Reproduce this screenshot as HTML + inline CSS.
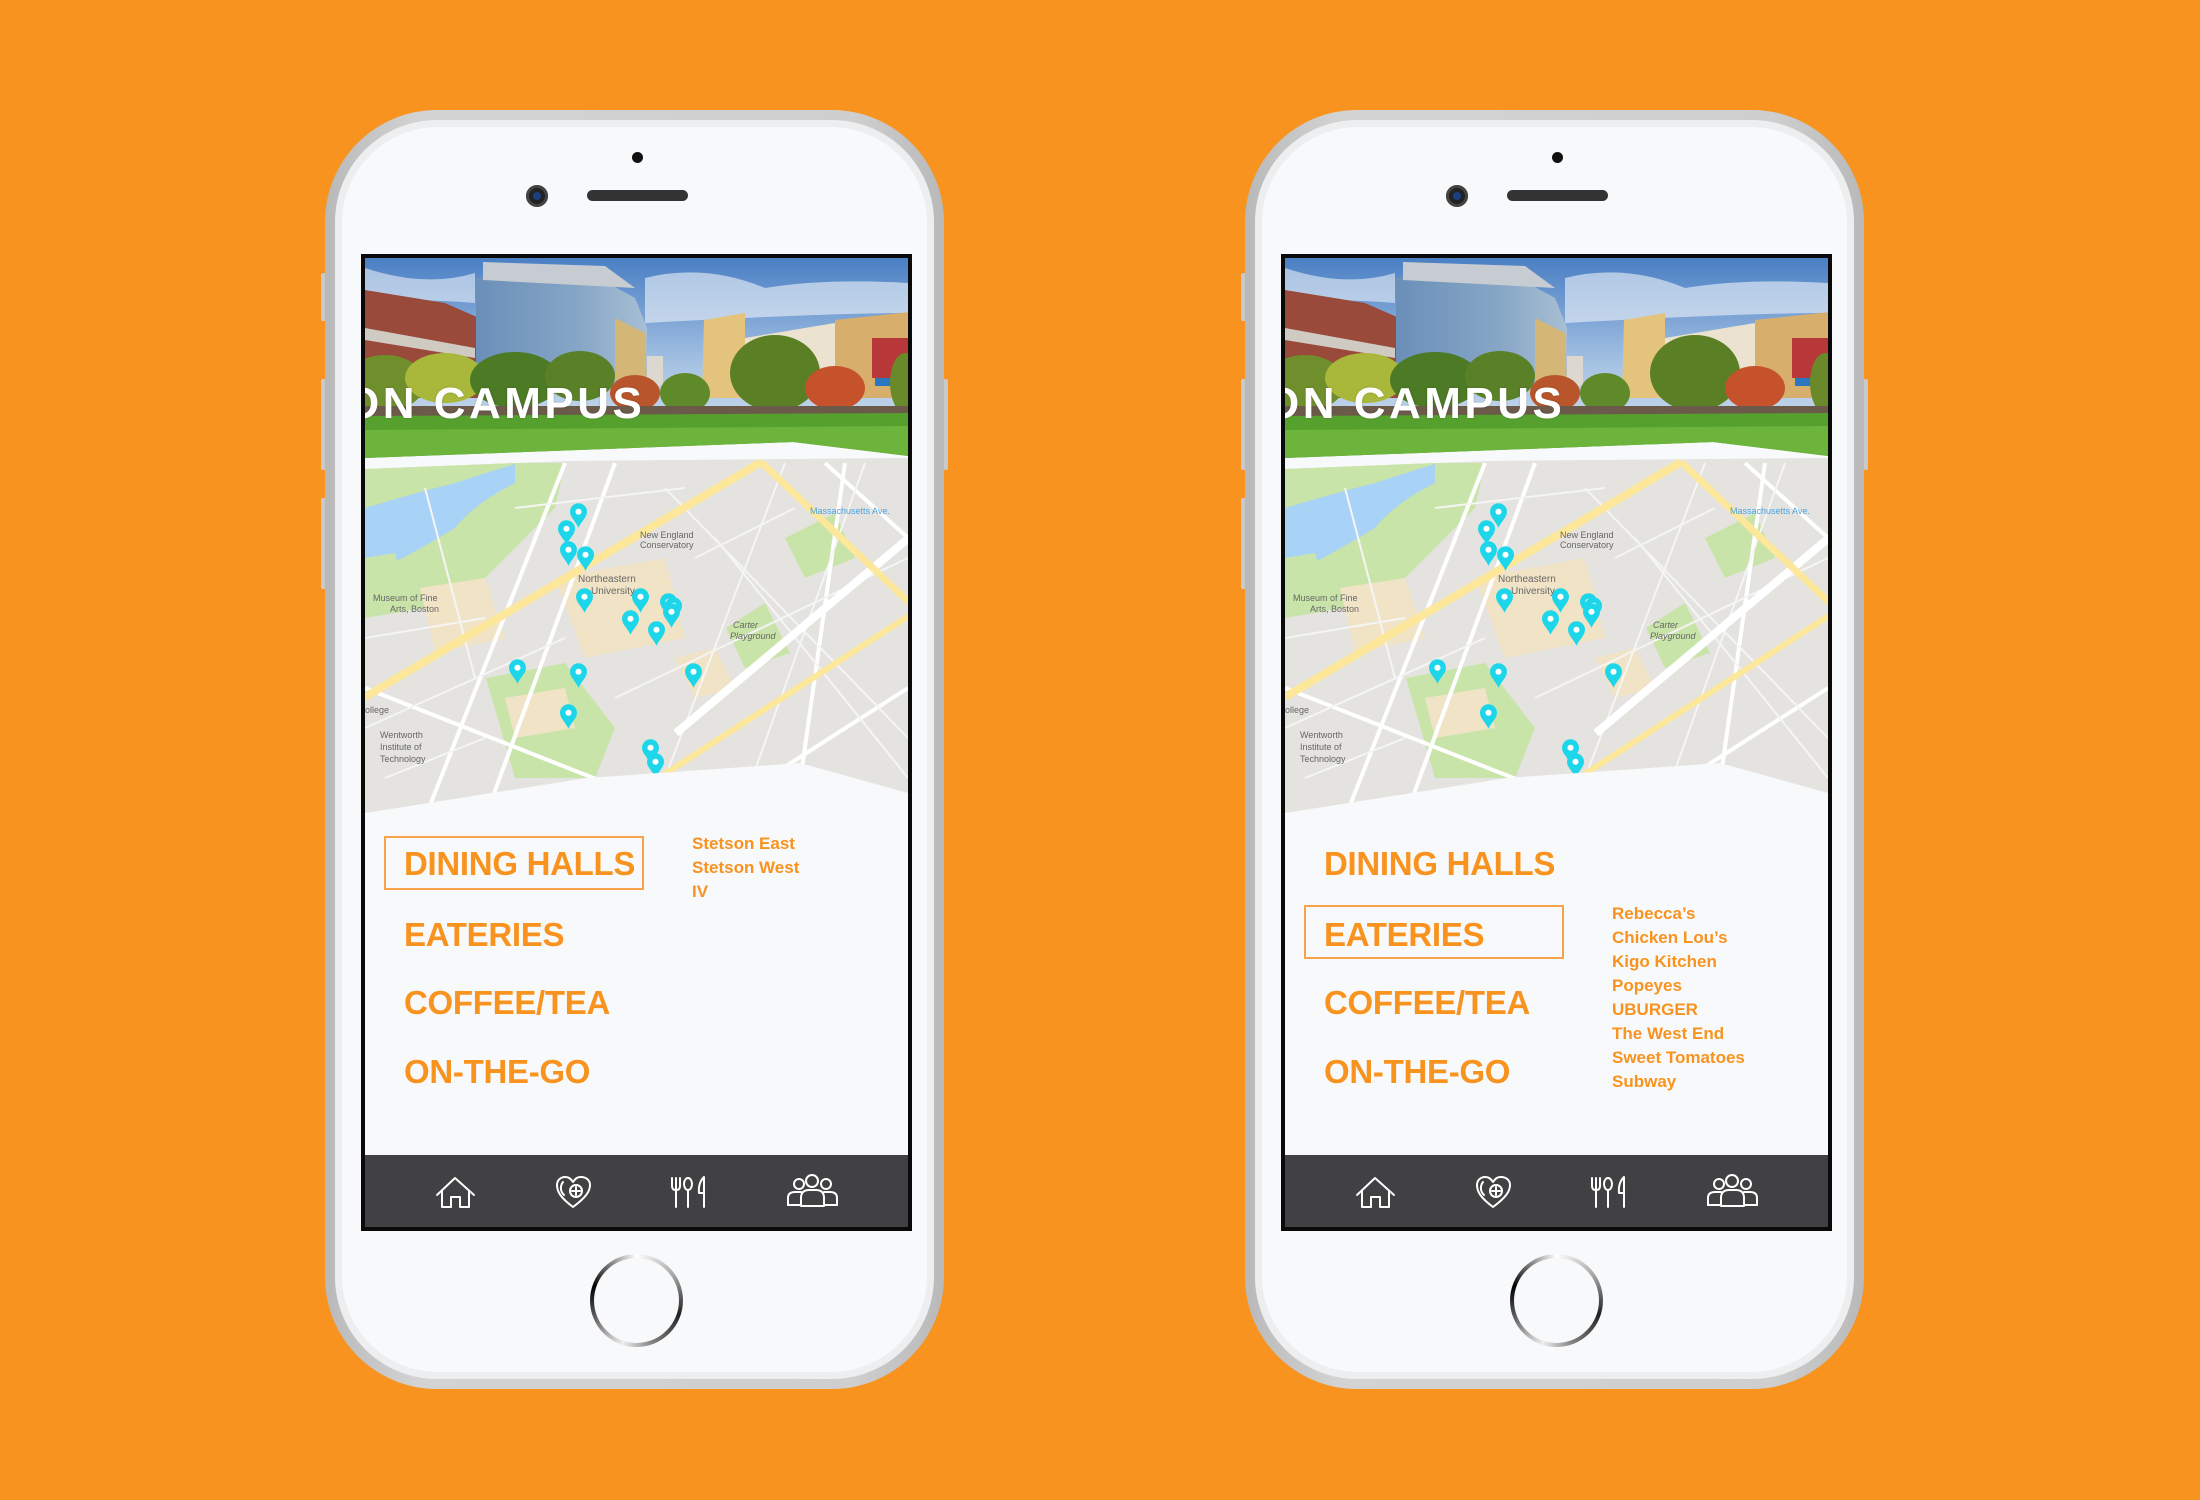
<!DOCTYPE html>
<html><head><meta charset="utf-8"><style>
*{margin:0;padding:0;box-sizing:border-box}
body{width:2200px;height:1500px;background:#f7931e;position:relative;overflow:hidden;font-family:"Liberation Sans",sans-serif}
.phone{position:absolute;top:110px;width:619px;height:1279px;border-radius:112px;background:linear-gradient(90deg,#b9b9b9,#d3d3d3 15%,#cfcfcf 85%,#b9b9b9);}
.phone .in{position:absolute;left:10px;top:10px;right:10px;bottom:10px;border-radius:102px;background:#eceeef}
.phone .in2{position:absolute;left:17px;top:17px;right:17px;bottom:17px;border-radius:96px;background:#f8f9fb}
.btn{position:absolute;width:5px;background:#c9c9c9;border-radius:2px}
.dot{position:absolute;left:307px;top:42px;width:11px;height:11px;border-radius:50%;background:#111}
.lens{position:absolute;left:201px;top:75px;width:22px;height:22px;border-radius:50%;background:#222;box-shadow:inset 0 0 0 3px #444}
.lens:after{content:"";position:absolute;left:7px;top:7px;width:8px;height:8px;border-radius:50%;background:#1c3e83}
.spk{position:absolute;left:262px;top:80px;width:101px;height:11px;border-radius:6px;background:#333}
.home{position:absolute;left:265px;top:1144px;width:93px;height:93px;border-radius:50%;background:conic-gradient(#fff,#aaa,#222 30%,#888 45%,#eee 55%,#555 70%,#000 80%,#fff);}
.home:after{content:"";position:absolute;left:4px;top:4px;right:4px;bottom:4px;border-radius:50%;background:#f8f9fb}
.screen{position:absolute;left:36px;top:144px;width:551px;height:977px;border:4px solid #0a0a0a;background:#f8f9fb;overflow:hidden}
.scr{position:absolute;left:0;top:0;width:543px;height:969px}
.title{position:absolute;left:-20px;top:124px;color:#fff;font-weight:bold;font-size:44px;letter-spacing:3.5px;line-height:1;white-space:nowrap;text-shadow:0 0 2px rgba(0,0,0,.2)}
.m{position:absolute;left:39px;color:#f7931e;font-weight:bold;font-size:33px;letter-spacing:-0.3px;line-height:1;white-space:nowrap}
.box{position:absolute;left:19px;width:260px;height:54px;border:2px solid #f7a34a}
.l{position:absolute;left:327px;color:#f7931e;font-weight:bold;font-size:17px;line-height:24px;white-space:nowrap}
.nav{position:absolute;left:0;top:897px;width:543px;height:72px;background:#414042}
</style></head><body>
<svg width="0" height="0" style="position:absolute">
<defs>
<clipPath id="mapclip"><polygon points="0,211 200,203 543,200 543,535 435,505 365,510 222,520 0,555"/></clipPath>
<clipPath id="photoclip"><polygon points="0,0 543,0 543,198 428,184 0,200"/></clipPath>
<linearGradient id="sky" x1="0" y1="0" x2="0" y2="1"><stop offset="0" stop-color="#4a7fc4"/><stop offset="0.55" stop-color="#a9c5e4"/><stop offset="1" stop-color="#d9e4ef"/></linearGradient>
<linearGradient id="glass" x1="0" y1="0" x2="1" y2="0"><stop offset="0" stop-color="#6a8fb8"/><stop offset="0.6" stop-color="#86a6c6"/><stop offset="1" stop-color="#a8bfd4"/></linearGradient>
<symbol id="pin" viewBox="0 0 18 26"><path d="M9 26 C6 19 0 15 0 9 A9 9 0 0 1 18 9 C18 15 12 19 9 26Z" fill="#1ed6ea"/><circle cx="9" cy="9" r="3.2" fill="#fff"/></symbol>
<symbol id="photo" viewBox="0 0 543 202">
<rect width="543" height="202" fill="url(#sky)"/>
<path d="M0 10 q60 20 110 5 l0 30 q-60 -5 -110 0z" fill="#e8eef6" opacity=".6"/>
<path d="M280 20 q60 -15 120 10 q60 -10 143 -5 v30 q-80 0 -263 10z" fill="#eef3f8" opacity=".6"/>
<polygon points="0,32 80,45 114,60 114,140 0,140" fill="#9a4a3a"/>
<polygon points="0,70 110,90 110,100 0,82" fill="#cfcac2"/>
<polygon points="111,20 150,10 230,18 270,40 282,70 282,130 111,130" fill="url(#glass)"/>
<polygon points="118,4 240,8 270,30 118,22" fill="#c7ccd3"/>
<polygon points="250,60 280,75 282,130 250,130" fill="#d4b677"/>
<rect x="282" y="98" width="16" height="30" fill="#ddd8cf"/>
<polygon points="339,62 380,55 380,140 337,140" fill="#e4c47c"/>
<polygon points="380,80 470,65 470,140 380,140" fill="#ebe2cf"/>
<polygon points="470,62 545,54 545,140 470,140" fill="#d8ae6c"/>
<rect x="507" y="80" width="36" height="40" fill="#b8383a"/>
<rect x="510" y="120" width="33" height="8" fill="#2a79c0"/>
<ellipse cx="20" cy="125" rx="40" ry="28" fill="#6f8f2c"/>
<ellipse cx="80" cy="120" rx="40" ry="25" fill="#a9b83a"/>
<ellipse cx="150" cy="122" rx="45" ry="28" fill="#4d7a25"/>
<ellipse cx="215" cy="118" rx="35" ry="25" fill="#5a8028"/>
<ellipse cx="270" cy="135" rx="25" ry="18" fill="#b8552a"/>
<ellipse cx="320" cy="135" rx="25" ry="20" fill="#5f8a2a"/>
<ellipse cx="410" cy="115" rx="45" ry="38" fill="#5a7f25"/>
<ellipse cx="470" cy="130" rx="30" ry="22" fill="#c5522a"/>
<ellipse cx="540" cy="125" rx="15" ry="30" fill="#6a8a2a"/>
<rect x="0" y="148" width="543" height="10" fill="#6b5a4a"/>
<polygon points="0,158 543,155 543,202 0,202" fill="#56a02e"/>
<polygon points="0,172 543,168 543,202 0,202" fill="#6cb43c"/>
</symbol>
<symbol id="map" viewBox="0 0 543 560">
<rect width="543" height="560" fill="#e4e3e0"/>
<polygon points="0,205 200,205 190,250 120,320 60,350 0,360" fill="#c9e4a9"/>
<path d="M0 250 Q50 235 90 225 Q130 212 150 206 L150 225 Q110 245 90 270 Q40 300 0 320Z" fill="#a9d2f7"/>
<polygon points="361,370 400,345 425,395 380,410" fill="#c9e4a9"/>
<polygon points="121,420 200,405 250,470 230,520 150,520" fill="#c9e4a9"/>
<polygon points="420,280 470,255 490,300 440,320" fill="#c9e4a9"/>
<polygon points="0,300 30,295 40,330 0,335" fill="#c9e4a9"/>
<polygon points="55,330 120,320 140,380 70,395" fill="#f1e3c6"/>
<polygon points="190,320 300,300 320,380 220,400" fill="#f1e3c6"/>
<polygon points="310,400 350,390 370,430 330,440" fill="#f1e3c6"/>
<polygon points="140,440 200,430 210,470 150,480" fill="#f1e3c6"/>
<g stroke="#fff" stroke-width="4" fill="none">
<path d="M60 560 L200 205"/><path d="M120 560 L250 205"/>
<path d="M0 430 L330 560"/><path d="M340 560 L543 430"/><path d="M430 560 L480 205"/>
<path d="M460 205 L543 280"/>
</g>
<g stroke="#f5f5f5" stroke-width="2" fill="none">
<path d="M0 470 L200 380"/><path d="M300 230 L543 480"/><path d="M250 440 L543 300"/><path d="M60 230 L110 420"/>
<path d="M420 205 L300 520"/><path d="M500 205 L380 540"/><path d="M350 280 L543 520"/><path d="M0 380 L120 360"/>
<path d="M150 250 L320 230"/><path d="M330 300 L430 250"/><path d="M20 520 L120 480"/>
</g>
<path d="M311 475 L545 279" stroke="#fff" stroke-width="8"/>
<path d="M0 439 L396 204" stroke="#fde79a" stroke-width="8"/>
<path d="M396 204 L550 350" stroke="#fde79a" stroke-width="7" fill="none"/>
<path d="M286 525 L545 357" stroke="#fde79a" stroke-width="6"/>
<g font-family="Liberation Sans" font-size="9" fill="#666">
<text x="213" y="324" font-size="10">Northeastern</text><text x="226" y="336" font-size="10">University</text>
<text x="275" y="280">New England</text><text x="275" y="290">Conservatory</text>
<text x="8" y="343">Museum of Fine</text><text x="25" y="354">Arts, Boston</text>
<text x="0" y="455">ollege</text><text x="15" y="480">Wentworth</text><text x="15" y="492">Institute of</text><text x="15" y="504">Technology</text>
<text x="368" y="370" font-style="italic">Carter</text><text x="365" y="381" font-style="italic">Playground</text>
<text x="445" y="256" fill="#4aa3df">Massachusetts Ave.</text>
</g>
<g>
<use href="#pin" x="205" y="245" width="17" height="25"/><use href="#pin" x="193" y="262" width="17" height="25"/>
<use href="#pin" x="195" y="283" width="17" height="25"/><use href="#pin" x="212" y="288" width="17" height="25"/>
<use href="#pin" x="211" y="330" width="17" height="25"/><use href="#pin" x="267" y="330" width="17" height="25"/>
<use href="#pin" x="295" y="335" width="17" height="25"/><use href="#pin" x="300" y="339" width="17" height="25"/>
<use href="#pin" x="298" y="345" width="17" height="25"/><use href="#pin" x="257" y="352" width="17" height="25"/>
<use href="#pin" x="283" y="363" width="17" height="25"/><use href="#pin" x="144" y="401" width="17" height="25"/>
<use href="#pin" x="205" y="405" width="17" height="25"/><use href="#pin" x="320" y="405" width="17" height="25"/>
<use href="#pin" x="195" y="446" width="17" height="25"/><use href="#pin" x="277" y="481" width="17" height="25"/>
<use href="#pin" x="282" y="495" width="17" height="25"/>
</g>
</symbol>
<symbol id="navicons" viewBox="0 0 543 72">
<g stroke="#fff" stroke-width="2" fill="none" stroke-linejoin="round" stroke-linecap="round">
<path d="M72 40 L90 23 L109 40 M77 36 V52 H86 V42 H95 V52 H104 V36"/>
<path d="M208 52 C196 43 192 37 192 30 C192 25 196 22 200 22 C204 22 206 24 208 27 C210 24 212 22 216 22 C221 22 225 25 225 30 C225 37 220 43 208 52Z"/>
<path d="M198 27 C195 31 195 36 199 40"/>
<circle cx="211" cy="36" r="6"/><path d="M211 32 V40 M207 36 H215"/>
<path d="M307 23 V31 Q307 35 311 35 Q315 35 315 31 V23 M311 23 V52"/>
<ellipse cx="323" cy="29" rx="4" ry="6"/><path d="M323 35 V52"/>
<path d="M339 52 V22 Q333 28 334 38 H339"/>
<circle cx="434" cy="29" r="5"/><circle cx="447" cy="26" r="6"/><circle cx="461" cy="29" r="5"/>
<path d="M423 50 V43 Q423 37 430 37 H436 M472 50 V43 Q472 37 465 37 H459"/>
<path d="M436 51 V43 Q436 35 444 35 H451 Q459 35 459 43 V51 Z"/>
<path d="M423 50 H436 M459 50 H472"/>
</g>
</symbol>
</defs>
</svg>

<!-- PHONE 1 -->
<div class="btn" style="left:321px;top:273px;height:48px"></div>
<div class="btn" style="left:321px;top:379px;height:91px"></div>
<div class="btn" style="left:321px;top:498px;height:91px"></div>
<div class="btn" style="left:943px;top:379px;height:91px"></div>
<div class="phone" style="left:325px">
<div class="in"></div><div class="in2"></div>
<div class="dot"></div><div class="lens"></div><div class="spk"></div>
<div class="home"></div>
<div class="screen"><div class="scr">
<svg style="position:absolute;left:0;top:0" width="543" height="560"><g clip-path="url(#photoclip)"><use href="#photo" x="0" y="0" width="543" height="202"/></g><g clip-path="url(#mapclip)"><use href="#map" x="0" y="0" width="543" height="560"/></g></svg>
<div class="title">ON CAMPUS</div>
<div class="box" style="top:578px"></div>
<div class="m" style="top:589px">DINING HALLS</div>
<div class="m" style="top:660px">EATERIES</div>
<div class="m" style="top:728px">COFFEE/TEA</div>
<div class="m" style="top:797px">ON-THE-GO</div>
<div class="l" style="top:574px">Stetson East<br>Stetson West<br>IV</div>
<div class="nav"><svg width="543" height="72"><use href="#navicons" x="0" y="0" width="543" height="72"/></svg></div>
</div></div>
</div>

<!-- PHONE 2 -->
<div class="btn" style="left:1241px;top:273px;height:48px"></div>
<div class="btn" style="left:1241px;top:379px;height:91px"></div>
<div class="btn" style="left:1241px;top:498px;height:91px"></div>
<div class="btn" style="left:1863px;top:379px;height:91px"></div>
<div class="phone" style="left:1245px">
<div class="in"></div><div class="in2"></div>
<div class="dot"></div><div class="lens"></div><div class="spk"></div>
<div class="home"></div>
<div class="screen"><div class="scr">
<svg style="position:absolute;left:0;top:0" width="543" height="560"><g clip-path="url(#photoclip)"><use href="#photo" x="0" y="0" width="543" height="202"/></g><g clip-path="url(#mapclip)"><use href="#map" x="0" y="0" width="543" height="560"/></g></svg>
<div class="title">ON CAMPUS</div>
<div class="box" style="top:647px"></div>
<div class="m" style="top:589px">DINING HALLS</div>
<div class="m" style="top:660px">EATERIES</div>
<div class="m" style="top:728px">COFFEE/TEA</div>
<div class="m" style="top:797px">ON-THE-GO</div>
<div class="l" style="top:644px">Rebecca’s<br>Chicken Lou’s<br>Kigo Kitchen<br>Popeyes<br>UBURGER<br>The West End<br>Sweet Tomatoes<br>Subway</div>
<div class="nav"><svg width="543" height="72"><use href="#navicons" x="0" y="0" width="543" height="72"/></svg></div>
</div></div>
</div>
</body></html>
